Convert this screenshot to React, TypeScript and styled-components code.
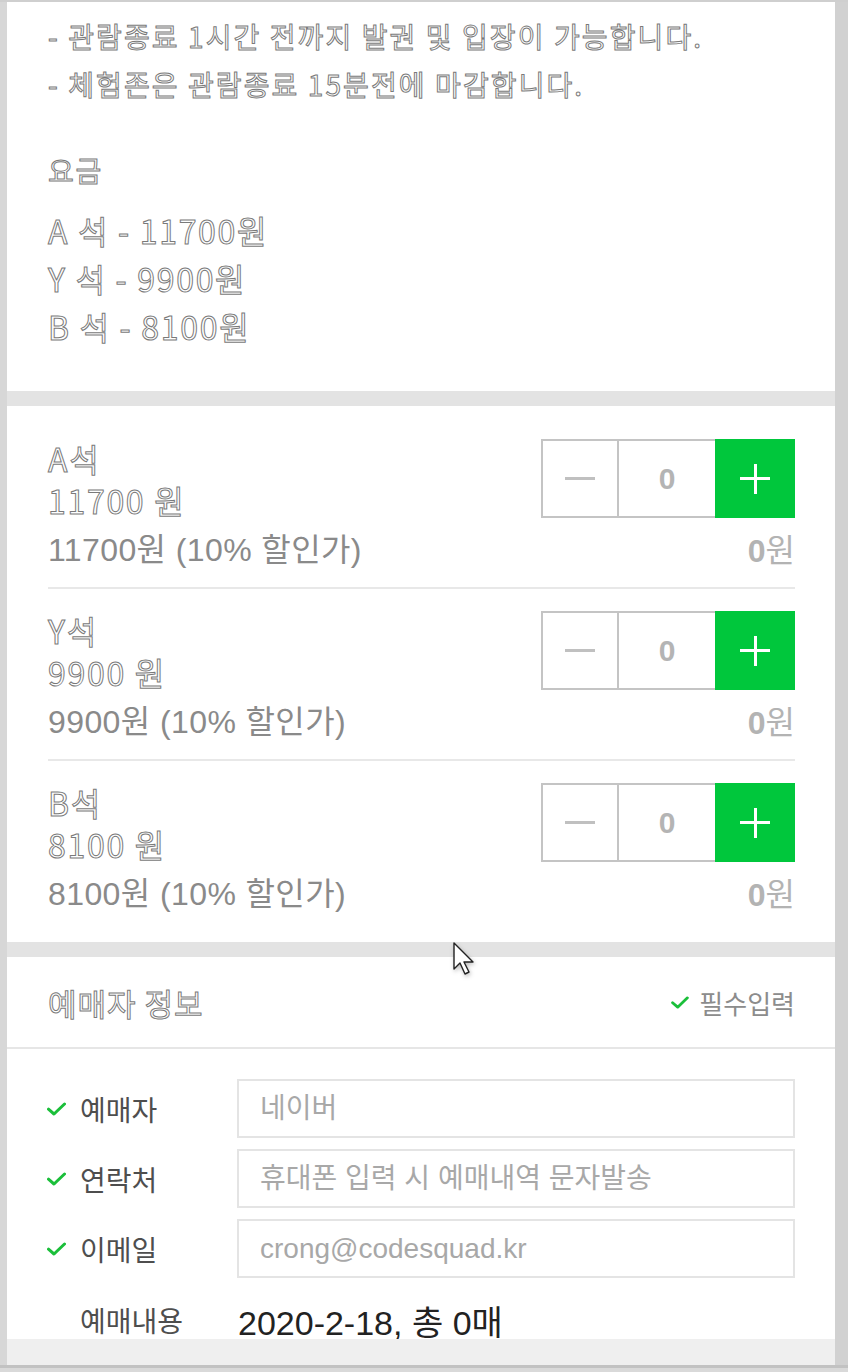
import React from 'react';
import styled, { createGlobalStyle, css } from 'styled-components';

const GlobalStyle = createGlobalStyle`
  html, body {
    margin: 0;
    padding: 0;
    background: #d6d6d6;
  }
  body {
    font-family: 'Noto Sans CJK KR', 'Noto Sans', sans-serif;
  }
`;

interface Ticket {
  grade: string;
  price: number;
}

const tickets: Ticket[] = [
  { grade: 'A', price: 11700 },
  { grade: 'Y', price: 9900 },
  { grade: 'B', price: 8100 },
];

const fields = [
  { label: '예매자', placeholder: '네이버' },
  { label: '연락처', placeholder: '휴대폰 입력 시 예매내역 문자발송' },
  { label: '이메일', placeholder: 'crong@codesquad.kr' },
];

const sysFont = `'Liberation Sans', 'Noto Sans CJK KR', sans-serif`;

// text in the capture came out hollow, keep that look
const hollow = css`
  color: #ffffff;
  -webkit-text-stroke: 1px #7a7a7a;
  -webkit-font-smoothing: antialiased;
  letter-spacing: 1.7px;
`;

const CheckIcon: React.FC<{ size?: number }> = ({ size = 19 }) => (
  <svg width={size} height={Math.round(size * 0.74)} viewBox="0 0 19 14" fill="none">
    <path d="M1.5 7.2 L7 12 L17.5 2" stroke="#1bbf3a" strokeWidth="3" strokeLinecap="round" strokeLinejoin="round" />
  </svg>
);

const App: React.FC = () => {
  return (
    <>
      <GlobalStyle />
      <Page>
        <TopEdge />
        <Body>
          <SideStrip />
          <Content>
            <InfoSection>
              <Notice>- 관람종료 1시간 전까지 발권 및 입장이 가능합니다.</Notice>
              <Notice>- 체험존은 관람종료 15분전에 마감합니다.</Notice>
              <FeeTitle>요금</FeeTitle>
              <PriceList>
                {tickets.map((t) => (
                  <PriceLine key={t.grade}>
                    {t.grade} 석 - {t.price}원
                  </PriceLine>
                ))}
              </PriceList>
            </InfoSection>

            <Band />

            <TicketSection>
              {tickets.map((t, i) => (
                <TicketRow key={t.grade} last={i === tickets.length - 1}>
                  <TicketInfo>
                    <Grade>{t.grade}석</Grade>
                    <Grade>{t.price} 원</Grade>
                    <Discount>{t.price}원 (10% 할인가)</Discount>
                  </TicketInfo>
                  <TicketControls>
                    <Stepper>
                      <StepButton>
                        <Minus />
                      </StepButton>
                      <Count>0</Count>
                      <StepButton primary>
                        <PlusH />
                        <PlusV />
                      </StepButton>
                    </Stepper>
                    <Subtotal>
                      <b>0</b>원
                    </Subtotal>
                  </TicketControls>
                </TicketRow>
              ))}
            </TicketSection>

            <Band />

            <BookerSection>
              <BookerHeader>
                <BookerTitle>예매자 정보</BookerTitle>
                <Required>
                  <CheckIcon size={18} />
                  필수입력
                </Required>
              </BookerHeader>
              <Form>
                {fields.map((f) => (
                  <FieldRow key={f.label}>
                    <FieldLabel>
                      <CheckIcon />
                      {f.label}
                    </FieldLabel>
                    <FieldInput placeholder={f.placeholder} />
                  </FieldRow>
                ))}
                <SummaryRow>
                  <FieldLabel>
                    <CheckSpace />
                    예매내용
                  </FieldLabel>
                  <SummaryValue>2020-2-18, 총 0매</SummaryValue>
                </SummaryRow>
              </Form>
            </BookerSection>
            <BottomBar />
          </Content>
          <ScrollTrack />
        </Body>
        <BottomEdge />
        <Cursor width="26" height="38" viewBox="0 0 26 38">
          <path d="M2 2 L2 28 L8 22 L13 33 L17 31 L12 21 L21 21 Z" fill="#ffffff" stroke="#222" strokeWidth="1.4" strokeLinejoin="round" />
        </Cursor>
      </Page>
    </>
  );
};

export default App;

// Styled Components
const Page = styled.div`
  position: relative;
  width: 848px;
  height: 1372px;
  display: flex;
  flex-direction: column;
  overflow: hidden;
  background: #d6d6d6;
`;

const TopEdge = styled.div`
  height: 2px;
  flex-shrink: 0;
  background: #cfcfcf;
`;

const BottomEdge = styled.div`
  height: 7px;
  flex-shrink: 0;
  background: #d9d9d9;
  border-top: 3px solid #c2c2c2;
  box-sizing: border-box;
`;

const Body = styled.div`
  flex: 1;
  display: flex;
  min-height: 0;
`;

const SideStrip = styled.div`
  width: 7px;
  flex-shrink: 0;
  background: #d7d7d7;
`;

const ScrollTrack = styled.div`
  width: 13px;
  flex-shrink: 0;
  background: #d1d1d1;
`;

const Content = styled.div`
  flex: 1;
  display: flex;
  flex-direction: column;
  background: #ffffff;
  overflow: hidden;
`;

const InfoSection = styled.section`
  padding: 10px 40px 41px 41px;
  background: #ffffff;
`;

const Notice = styled.p`
  margin: 0;
  font-size: 28px;
  line-height: 48px;
  white-space: nowrap;
  ${hollow}
  letter-spacing: 2.1px;
`;

const FeeTitle = styled.h3`
  margin: 38px 0 0;
  font-size: 28px;
  font-weight: 400;
  line-height: 48px;
  ${hollow}
`;

const PriceList = styled.div`
  margin-top: 12px;
  display: flex;
  flex-direction: column;
`;

const PriceLine = styled.div`
  font-size: 32px;
  line-height: 48px;
  ${hollow}
`;

const Band = styled.div`
  height: 15px;
  flex-shrink: 0;
  background: #e3e3e3;
`;

const TicketSection = styled.section`
  padding: 11px 40px 9px 41px;
  background: #ffffff;
`;

const TicketRow = styled.div<{ last?: boolean }>`
  display: flex;
  justify-content: space-between;
  padding-top: 22px;
  height: 148px;
  border-bottom: 2px solid ${(p) => (p.last ? 'transparent' : '#e8e8e8')};
  box-sizing: content-box;
`;

const TicketInfo = styled.div`
  display: flex;
  flex-direction: column;
  margin-top: -2px;
`;

const Grade = styled.div`
  font-size: 32px;
  line-height: 42px;
  ${hollow}
`;

const Discount = styled.div`
  margin-top: 8px;
  font-family: ${sysFont};
  font-size: 32px;
  letter-spacing: 0.4px;
  line-height: 42px;
  color: #8a8a8a;
`;

const TicketControls = styled.div`
  display: flex;
  flex-direction: column;
  align-items: flex-end;
`;

const Stepper = styled.div`
  display: flex;
  height: 79px;
`;

const StepButton = styled.div<{ primary?: boolean }>`
  position: relative;
  width: ${(p) => (p.primary ? '80px' : '78px')};
  box-sizing: border-box;
  display: flex;
  align-items: center;
  justify-content: center;
  background: ${(p) => (p.primary ? '#00c73c' : '#ffffff')};
  border: 2px solid ${(p) => (p.primary ? '#00c73c' : '#c4c4c4')};
`;

const Minus = styled.span`
  width: 30px;
  height: 3px;
  background: #c0c0c0;
`;

const PlusH = styled.span`
  position: absolute;
  width: 30px;
  height: 3px;
  background: #ffffff;
`;

const PlusV = styled.span`
  position: absolute;
  width: 3px;
  height: 30px;
  background: #ffffff;
`;

const Count = styled.div`
  width: 96px;
  box-sizing: border-box;
  border-top: 2px solid #c4c4c4;
  border-bottom: 2px solid #c4c4c4;
  display: flex;
  align-items: center;
  justify-content: center;
  font-family: ${sysFont};
  font-size: 30px;
  font-weight: 700;
  color: #b4b4b4;
`;

const Subtotal = styled.div`
  margin-top: 12px;
  font-family: ${sysFont};
  font-size: 32px;
  line-height: 42px;
  color: #b3b3b3;

  b {
    font-weight: 700;
  }
`;

const BookerSection = styled.section`
  background: #ffffff;
`;

const BookerHeader = styled.div`
  height: 90px;
  padding: 0 40px 0 41px;
  display: flex;
  align-items: center;
  justify-content: space-between;
  border-bottom: 2px solid #e6e6e6;
`;

const BookerTitle = styled.h2`
  margin: 0;
  font-size: 31px;
  font-weight: 400;
  ${hollow}
  letter-spacing: 1px;
`;

const Required = styled.div`
  display: flex;
  align-items: center;
  gap: 10px;
  font-size: 26px;
  color: #8c8c8c;
`;

const Form = styled.div`
  padding: 30px 40px 0 40px;
  display: flex;
  flex-direction: column;
  gap: 11px;
`;

const FieldRow = styled.div`
  display: flex;
  align-items: center;
  height: 59px;
`;

const FieldLabel = styled.div`
  width: 190px;
  flex-shrink: 0;
  display: flex;
  align-items: center;
  gap: 14px;
  font-size: 28px;
  color: #4e4e4e;
`;

const CheckSpace = styled.span`
  width: 19px;
`;

const FieldInput = styled.input`
  flex: 1;
  height: 59px;
  box-sizing: border-box;
  border: 2px solid #e4e4e4;
  padding: 0 21px;
  font-family: ${sysFont};
  font-size: 28px;
  color: #333;
  outline: none;

  &::placeholder {
    color: #a8a8a8;
  }
`;

const SummaryRow = styled.div`
  display: flex;
  align-items: center;
  height: 38px;
  margin-top: 12px;
`;

const SummaryValue = styled.div`
  margin-left: 1px;
  font-family: ${sysFont};
  font-size: 34px;
  color: #222222;
  white-space: nowrap;
`;

const BottomBar = styled.div`
  flex: 1;
  background: #efefef;
`;

const Cursor = styled.svg`
  position: absolute;
  left: 452px;
  top: 941px;
  filter: drop-shadow(1px 2px 2px rgba(0, 0, 0, 0.25));
`;
